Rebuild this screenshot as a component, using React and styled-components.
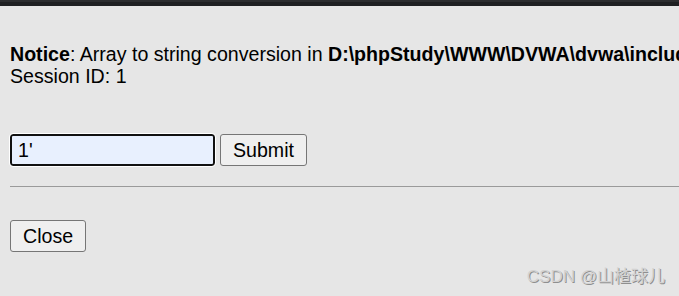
import React from 'react'
import styled, { createGlobalStyle } from 'styled-components'

const GlobalStyle = createGlobalStyle`
  html, body {
    margin: 0;
    padding: 0;
    background: #e6e6e6;
    overflow: hidden;
  }
  body {
    font-family: 'Liberation Sans', Arial, sans-serif;
  }
`

const Page = styled.div`
  width: 679px;
  height: 296px;
  position: relative;
  overflow: hidden;
  background: #e6e6e6;
`

const TopBar = styled.div`
  height: 6px;
  background: #1f2022;
  border-top: 2px solid #2c2d2f;
  box-sizing: border-box;
`

const Content = styled.div`
  padding: 37px 0 0 10px;
  color: #000;
  font-size: 19.6px;
  line-height: 22px;
`

const Message = styled.div`
  white-space: nowrap;
`

const Form = styled.form`
  display: flex;
  align-items: center;
  gap: 5px;
  margin-top: 47px;
`

const TextInput = styled.input`
  width: 205px;
  height: 32px;
  box-sizing: border-box;
  border: 2px solid #111;
  border-radius: 3px;
  outline: 1px solid #fff;
  outline-offset: 0;
  background: #e8f0fe;
  font-family: inherit;
  font-size: 19.6px;
  padding: 0 6px;
  color: #000;
`

const Button = styled.button`
  height: 32px;
  box-sizing: border-box;
  padding: 0 ${p => p.$pad || 12}px;
  border: 1px solid #767676;
  border-radius: 3px;
  background: #efefef;
  font-family: inherit;
  font-size: 19.6px;
  color: #000;
`

const Rule = styled.hr`
  margin: 20px 0 0 0;
  border: none;
  border-top: 1px solid #9a9a9a;
`

const CloseRow = styled.div`
  margin-top: 33px;
`

const Watermark = styled.div`
  position: absolute;
  right: 14px;
  bottom: 9px;
  font-family: 'Liberation Sans', 'Noto Sans CJK SC', sans-serif;
  font-size: 17px;
  color: #d2d2d2;
  text-shadow: 1px 1px 0 #8f8f8f;
`

export default function App() {
  return (
    <Page>
      <GlobalStyle />
      <TopBar />
      <Content>
        <Message>
          <b>Notice</b>: Array to string conversion in <b>D:\phpStudy\WWW\DVWA\dvwa\includes\dvwaPage.inc.php</b>
        </Message>
        <Message>Session ID: 1</Message>
        <Form onSubmit={e => e.preventDefault()}>
          <TextInput defaultValue="1'" />
          <Button type="submit">Submit</Button>
        </Form>
        <Rule />
        <CloseRow>
          <Button type="button" $pad={12}>Close</Button>
        </CloseRow>
      </Content>
      <Watermark>CSDN @山楂球儿</Watermark>
    </Page>
  )
}
